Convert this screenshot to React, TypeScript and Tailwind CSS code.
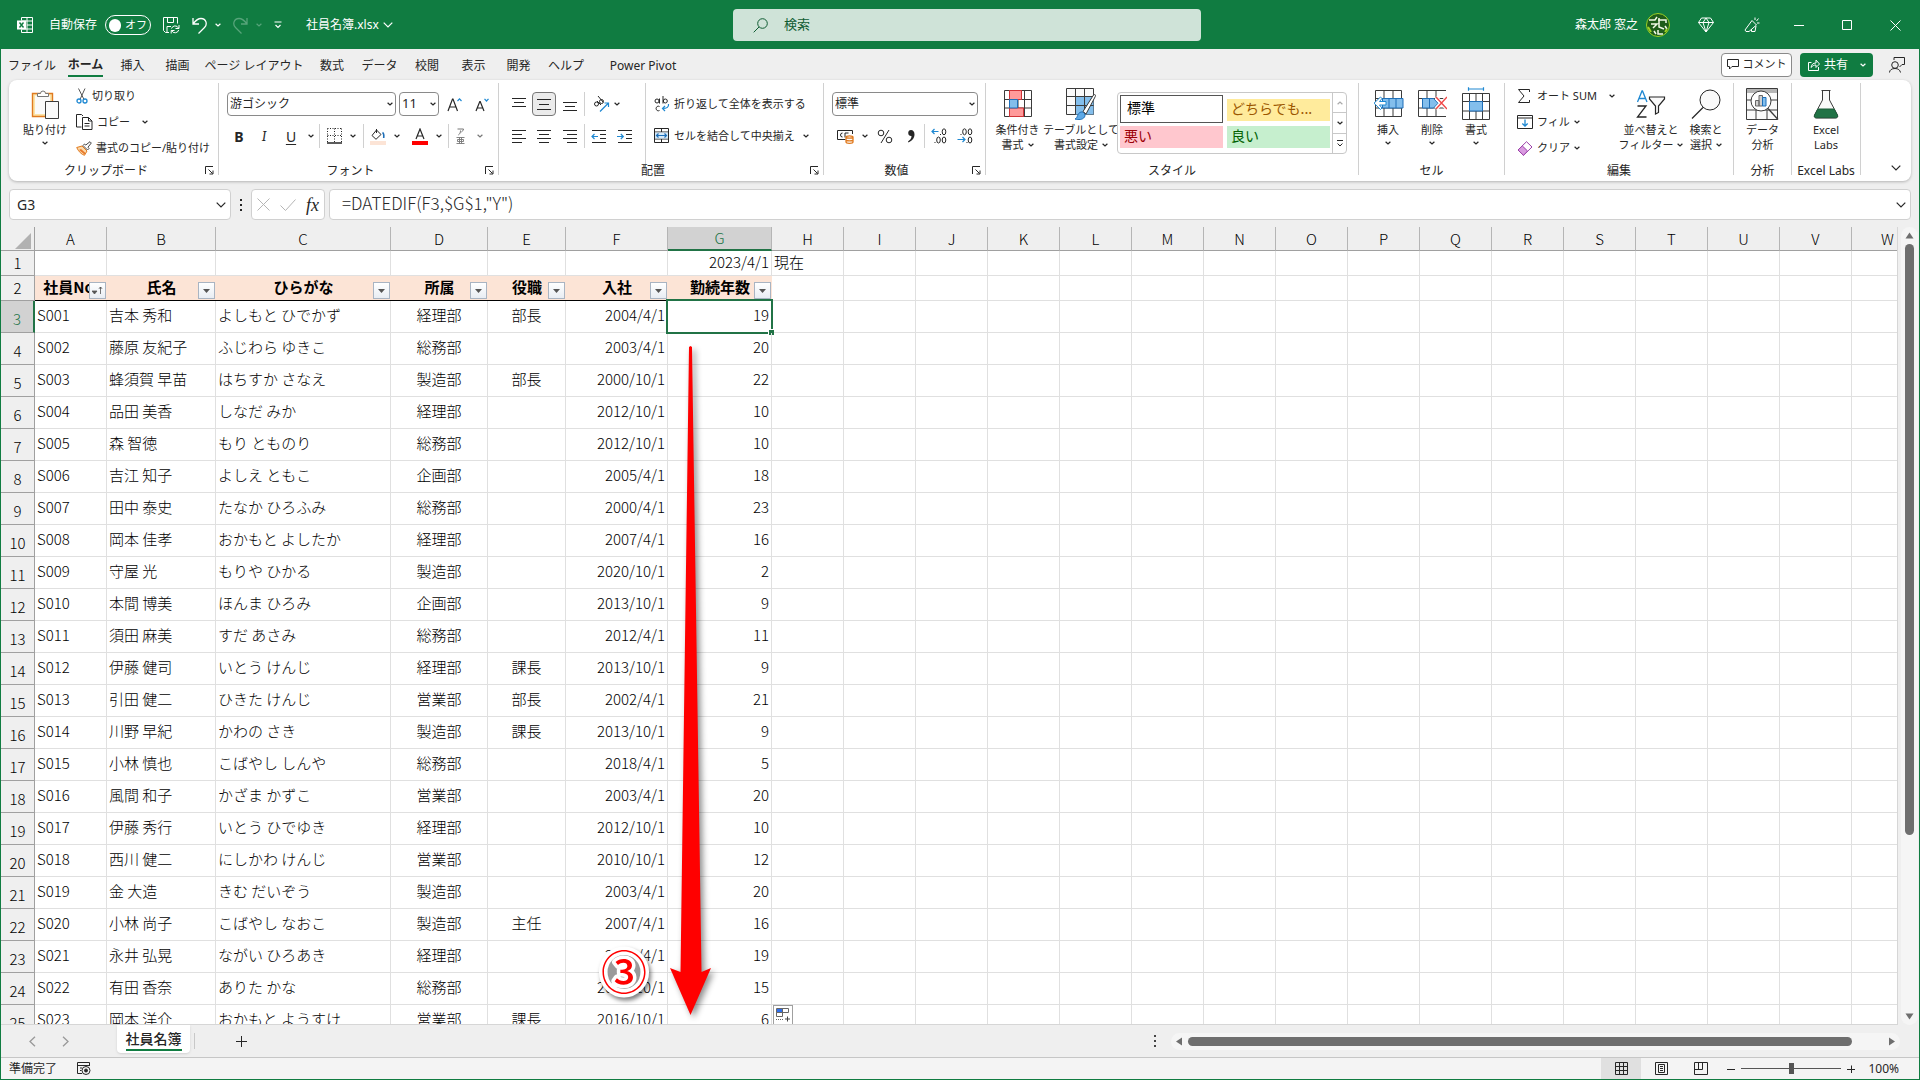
import React, { useState } from 'react';

type Employee = [string, string, string, string, string, string, number];

const employees: Employee[] = [
  ['S001', '吉本 秀和', 'よしもと ひでかず', '経理部', '部長', '2004/4/1', 19],
  ['S002', '藤原 友紀子', 'ふじわら ゆきこ', '総務部', '', '2003/4/1', 20],
  ['S003', '蜂須賀 早苗', 'はちすか さなえ', '製造部', '部長', '2000/10/1', 22],
  ['S004', '品田 美香', 'しなだ みか', '経理部', '', '2012/10/1', 10],
  ['S005', '森 智徳', 'もり とものり', '総務部', '', '2012/10/1', 10],
  ['S006', '吉江 知子', 'よしえ ともこ', '企画部', '', '2005/4/1', 18],
  ['S007', '田中 泰史', 'たなか ひろふみ', '総務部', '', '2000/4/1', 23],
  ['S008', '岡本 佳孝', 'おかもと よしたか', '経理部', '', '2007/4/1', 16],
  ['S009', '守屋 光', 'もりや ひかる', '製造部', '', '2020/10/1', 2],
  ['S010', '本間 博美', 'ほんま ひろみ', '企画部', '', '2013/10/1', 9],
  ['S011', '須田 麻美', 'すだ あさみ', '総務部', '', '2012/4/1', 11],
  ['S012', '伊藤 健司', 'いとう けんじ', '経理部', '課長', '2013/10/1', 9],
  ['S013', '引田 健二', 'ひきた けんじ', '営業部', '部長', '2002/4/1', 21],
  ['S014', '川野 早紀', 'かわの さき', '製造部', '課長', '2013/10/1', 9],
  ['S015', '小林 慎也', 'こばやし しんや', '総務部', '', '2018/4/1', 5],
  ['S016', '風間 和子', 'かざま かずこ', '営業部', '', '2003/4/1', 20],
  ['S017', '伊藤 秀行', 'いとう ひでゆき', '経理部', '', '2012/10/1', 10],
  ['S018', '西川 健二', 'にしかわ けんじ', '営業部', '', '2010/10/1', 12],
  ['S019', '金 大造', 'きむ だいぞう', '製造部', '', '2003/4/1', 20],
  ['S020', '小林 尚子', 'こばやし なおこ', '製造部', '主任', '2007/4/1', 16],
  ['S021', '永井 弘晃', 'ながい ひろあき', '経理部', '', '2004/4/1', 19],
  ['S022', '有田 香奈', 'ありた かな', '総務部', '', '2007/10/1', 15],
  ['S023', '岡本 洋介', 'おかもと ようすけ', '営業部', '課長', '2016/10/1', 6],
];

const columns = [
  { name: 'A', width: 'w-[72px]' },
  { name: 'B', width: 'w-[109px]' },
  { name: 'C', width: 'w-[175px]' },
  { name: 'D', width: 'w-[97px]' },
  { name: 'E', width: 'w-[78px]' },
  { name: 'F', width: 'w-[102px]' },
  { name: 'G', width: 'w-[104px]' },
  ...'HIJKLMNOPQRSTUVW'.split('').map((name) => ({ name, width: 'w-[72px]' })),
];

const fields = ['社員No.', '氏名', 'ひらがな', '所属', '役職', '入社', '勤続年数'];
const emptyColumns = columns.slice(7);

const tabs = [
  { label: 'ファイル', width: 'w-[58px]' },
  { label: 'ホーム', width: 'w-[49px]' },
  { label: '挿入', width: 'w-[45px]' },
  { label: '描画', width: 'w-[45px]' },
  { label: 'ページ レイアウト', width: 'w-[108px]' },
  { label: '数式', width: 'w-[48px]' },
  { label: 'データ', width: 'w-[47px]' },
  { label: '校閲', width: 'w-[48px]' },
  { label: '表示', width: 'w-[45px]' },
  { label: '開発', width: 'w-[45px]' },
  { label: 'ヘルプ', width: 'w-[50px]' },
  { label: 'Power Pivot', width: 'w-[104px]' },
];

type IconProps = { w: number; h: number; className?: string; children: React.ReactNode };

const Icon = ({ w, h, className = '', children }: IconProps) => (
  <svg
    width={w}
    height={h}
    viewBox={`0 0 ${w} ${h}`}
    fill="none"
    stroke="currentColor"
    className={`shrink-0 ${className}`}
    aria-hidden="true"
  >
    {children}
  </svg>
);

const Chevron = ({ className = '' }: { className?: string }) => (
  <Icon w={6} h={4} className={className}>
    <path d="M.6 .7 3 3l2.4-2.3" strokeWidth="1.2" />
  </Icon>
);

const WideChevron = () => (
  <Icon w={10} h={6}>
    <path d="M.7 .7 5 5 9.300 .7" strokeWidth="1.2" />
  </Icon>
);

const Launcher = ({ label }: { label: string }) => (
  <button aria-label={label} className="absolute right-1 bottom-0">
    <Icon w={9} h={9}>
      <path d="M.5 8V.5H8M3.500 3.500l4 4M8 4.500V8H4.500" />
    </Icon>
  </button>
);

type GroupProps = { label: string; width: string; launcher?: boolean; children: React.ReactNode };

const Group = ({ label, width, launcher, children }: GroupProps) => (
  <section className={`relative flex h-[92px] shrink-0 flex-col border-r border-[#d0d0d0] ${width}`}>
    <div className="flex flex-1">{children}</div>
    <h2 className={`text-center text-[12px] leading-[9px] whitespace-nowrap ${launcher ? 'pr-4' : ''}`}>
      {label}
    </h2>
    {launcher && <Launcher label={`${label}の設定`} />}
  </section>
);

const Divider = () => <span className="h-6 w-px shrink-0 bg-[#d0d0d0]" />;

type ToolProps = { label: string; width: string; className?: string; children: React.ReactNode };

const Tool = ({ label, width, className = '', children }: ToolProps) => (
  <button
    aria-label={label}
    className={`flex h-6 shrink-0 items-center justify-center ${width} ${className}`}
  >
    {children}
  </button>
);

type BigButtonProps = { icon: React.ReactNode; lines: string[]; width: string; chevron?: 'inline' | 'below' };

const BigButton = ({ icon, lines, width, chevron }: BigButtonProps) => (
  <button className={`flex shrink-0 flex-col items-center pt-[3px] ${width}`}>
    <span className="flex h-9 items-center">{icon}</span>
    {lines.map((line, i) => (
      <span key={line} className="flex items-center gap-1 leading-[15px] whitespace-nowrap">
        {line}
        {chevron === 'inline' && i === lines.length - 1 && <Chevron />}
      </span>
    ))}
    {chevron === 'below' && <Chevron className="mt-1" />}
  </button>
);

const Lines = ({ rows }: { rows: [number, number, number][] }) => (
  <Icon w={14} h={14}>
    {rows.map(([x1, x2, y]) => (
      <path key={y} d={`M${x1} ${y}H${x2}`} />
    ))}
  </Icon>
);

const ExcelIcon = () => (
  <Icon w={16} h={16}>
    <path d="M4.500 3.500v-3h11v15h-11v-3M10 .5v15M4.500 4h11M10 8h5.500M4.500 12h11" />
    <rect x="0" y="3.500" width="9" height="9" fill="#fff" stroke="none" />
    <path d="M2.500 5.500l4 5M6.500 5.500l-4 5" stroke="#107c41" strokeWidth="1.400" />
  </Icon>
);

const PasteIcon = () => (
  <Icon w={28} h={30}>
    <path d="M1.500 4.500h20v23h-20z" fill="#fce3a6" stroke="#e07a1f" strokeWidth="1.400" />
    <path d="M4 6.500h15v18.500H4z" fill="#fafafa" stroke="none" />
    <path d="M6.500 7.500v-3h3a2.500 2.500 0 0 1 5 0h3v3z" fill="#fff" stroke="#777" />
    <path d="M14.500 12.500h13v17h-13z" fill="#fafafa" stroke="#3b3b3b" />
  </Icon>
);

const ScissorsIcon = () => (
  <Icon w={12} h={16}>
    <path d="M2.500 .5l5.500 11M9 .5l-5 11" stroke="#555" />
    <circle cx="3" cy="13" r="2" stroke="#1e88d2" strokeWidth="1.300" />
    <circle cx="9" cy="13" r="2" stroke="#1e88d2" strokeWidth="1.300" />
  </Icon>
);

const CopyIcon = () => (
  <Icon w={17} h={16}>
    <path d="M5.500 13H.5V.5h5L7 2" />
    <path d="M6.500 3.500h6l3.500 3.500v8.500H6.500zM12.500 3.500V7H16M8.500 9.500h5M8.500 12h5" />
  </Icon>
);

const BrushIcon = () => (
  <Icon w={16} h={15}>
    <path d="M.7 6.500 6 5l5 5-2.500 4.300C5.500 13.500 2.500 10.500.7 6.500z" fill="#fcd9a8" stroke="#e07a1f" />
    <path d="M3 9l5.500 4.500L9.500 12 5 8z" fill="#e8792b" stroke="none" />
    <path d="M7 4.500 11.500 9 13 7.500l-1-1.300L15.300 2 14 .7 9.800 4 8.500 3z" fill="#fff" stroke="#444" />
  </Icon>
);

const ConditionalIcon = () => (
  <Icon w={28} h={28}>
    <path d="M.5 .5h27v26H.5zM.5 9.500h27M.5 18h27M5.500 .5v26M14 .5v26M20.500 .5v26" stroke="#3b3b3b" />
    <path d="M5.500 .5h12v9h-12zM5.500 18h14v8.500h-14z" fill="#ff9a9a" stroke="#d13438" />
    <path d="M5.500 9.500h8V18h-8z" fill="#83beec" stroke="#1e6fb8" />
  </Icon>
);

const TableFormatIcon = () => (
  <Icon w={30} h={32}>
    <path d="M.5 .5h27v26H.5z" fill="#fafafa" stroke="#3b3b3b" />
    <path d="M9.500 8.500h18v18h-18z" fill="#83beec" stroke="none" />
    <path d="M.5 8.500h27M.5 17.500h27M9.500 .5v26M18.500 .5v26" stroke="#3b3b3b" />
    <path d="M9 31c3-1 2-6 6-7 3-.5 5 2.500 3.500 5-2 3-6 3-9.500 2z" fill="#5ea9e6" stroke="#1e6fb8" />
    <path d="M17 23.500 27.500 7c1.500-1 2.500 0 1.800 1.500L20 26z" fill="#fff" stroke="#3b3b3b" />
  </Icon>
);

const InsertIcon = () => (
  <Icon w={31} h={28}>
    <path d="M2.500 .5h26v26h-26zM11 .5v26M20 .5v26M2.500 8.500h26M2.500 18h26" stroke="#3b3b3b" />
    <path d="M9.500 8.500h20.500V18H9.500z" fill="#83beec" stroke="#1e6fb8" />
    <path d="M16 8.500V18M23 8.500V18" stroke="#1e6fb8" />
    <path d="M13 11.500H6.500l2.500-3L7.500 7 1 13.200 7.500 19.500 9 18l-2.500-3H13z" fill="#fff" stroke="#1e88d2" />
  </Icon>
);

const DeleteIcon = () => (
  <Icon w={29} h={28}>
    <path d="M28 .5H.5v26H28M9 .5v8M18 .5v8M9 18v8.500M18 18v8.500M.5 8.500h27M.5 18h27" stroke="#3b3b3b" />
    <path d="M4.500 8.500h11l4.500 4.800-4.500 4.700h-11z" fill="#83beec" stroke="#1e6fb8" />
    <path d="M11.500 8.500V18" stroke="#1e6fb8" />
    <path d="M18 7l11 12M29 7 18 19" stroke="#fff" strokeWidth="3.500" />
    <path d="M18 7l11 12M29 7 18 19" stroke="#f04747" strokeWidth="1.400" />
  </Icon>
);

const FormatIcon = () => (
  <Icon w={28} h={34}>
    <path d="M6.500 2h15M6.500 .3v3.500M21.500 .3v3.500" stroke="#1e88d2" strokeWidth="1.200" />
    <path d="M.5 6.500h27v26H.5zM.5 14.500h27M.5 24h27M7.500 6.500v26M20.500 6.500v26M14 6.500v8M14 24v8.500" stroke="#3b3b3b" />
    <path d="M7.500 14.500h13V24h-13z" fill="#83beec" stroke="#1e6fb8" />
  </Icon>
);

const SortIcon = () => (
  <Icon w={30} h={30}>
    <path d="M1.500 13 6 2h.5L11 13M3 9.500h6.500" stroke="#1e88d2" strokeWidth="1.300" />
    <path d="M1.500 17h8.500L1.500 28H10.500" strokeWidth="1.300" />
    <path d="M13.500 8h15v2L22.500 17v6.500l-3 1.500v-8l-6-7z" fill="#fafafa" strokeWidth="1.200" />
  </Icon>
);

const FindIcon = () => (
  <Icon w={30} h={30}>
    <circle cx="19" cy="11" r="10" fill="#fafafa" />
    <path d="M12 18.500 1 29.500" strokeWidth="1.200" />
  </Icon>
);

const AnalyzeIcon = () => (
  <Icon w={33} h={33}>
    <path d="M.5 .5h31v31H.5zM.5 12h31M.5 22h31M10 22v9.500M21 22v9.500" stroke="#3b3b3b" fill="#fafafa" />
    <path d="M1 1h30v4H1z" fill="#b5b5b5" stroke="none" />
    <circle cx="15" cy="13" r="10" fill="#fff" stroke="#3b3b3b" />
    <path d="M9.500 12.500h3.500V18H9.500zM13 7.500h3.500V18H13z" fill="#d0d0d0" stroke="#666" />
    <path d="M16.500 9.500H20V18h-3.500z" fill="#83beec" stroke="#1e6fb8" />
    <path d="M22 20.500 32 31.500" stroke="#3b3b3b" strokeWidth="1.300" />
  </Icon>
);

const FlaskIcon = () => (
  <Icon w={26} h={29}>
    <path d="M8.500 .5h9M9.500 .5V10L1.500 25c-.6 1.500 0 3 1.700 3h19.600c1.700 0 2.300-1.500 1.700-3L16.500 10V.5" fill="#fafafa" stroke="#3b3b3b" />
    <path d="M4.800 19h16.400l3.300 6.500c.4 1.200-.3 2.200-1.700 2.200H3.200c-1.400 0-2.100-1-1.700-2.200z" fill="#217346" stroke="#1c5c39" />
  </Icon>
);

function TitleBar() {
  const [autoSave, setAutoSave] = useState(false);

  return (
    <header className="flex h-12 shrink-0 items-center bg-[#107c41] text-white">
      <div className="flex flex-1 items-center pl-4 whitespace-nowrap">
        <ExcelIcon />
        <label className="ml-4 flex items-center gap-2">
          自動保存
          <input
            type="checkbox"
            className="sr-only"
            checked={autoSave}
            onChange={(e) => setAutoSave(e.target.checked)}
          />
          <span className="flex h-5 w-[46px] items-center gap-1 rounded-full border border-white px-[3px] text-[11px]">
            <span className="size-[13px] rounded-full bg-white" />
            オフ
          </span>
        </label>
        <button aria-label="上書き保存" className="ml-3">
          <Icon w={17} h={17}>
            <path d="M6 15.500H2.500l-2-2V.5h14v6M4.500 .5v5h6v-5M4 15V9.500h4" />
            <path d="M8.500 11.500a3.800 3.800 0 0 1 7-.5M16 8v3.500h-3.500M15.700 13a3.800 3.800 0 0 1-7 .8M8.200 16.500V13.500h3.300" />
          </Icon>
        </button>
        <button aria-label="元に戻す" className="ml-3 flex items-center gap-2">
          <Icon w={15} h={17}>
            <path d="M1 1v6h6M1.300 6.500C4 3 6 1.500 9 1.500c5.500 0 6.500 6 3.500 9L6.500 16.500" strokeWidth="1.300" />
          </Icon>
          <Chevron />
        </button>
        <button aria-label="やり直し" className="ml-3 flex items-center gap-2 text-[#57a47a]">
          <Icon w={15} h={17}>
            <path d="M14 1v6H8M13.700 6.500C11 3 9 1.500 6 1.500c-5.500 0-6.500 6-3.500 9L8.500 16.500" strokeWidth="1.300" />
          </Icon>
          <Chevron />
        </button>
        <button aria-label="クイック アクセス ツール バーのカスタマイズ" className="ml-3">
          <Icon w={8} h={8}>
            <path d="M.5 1h7M1.500 4l2.500 2.500L6.500 4" strokeWidth="1.200" />
          </Icon>
        </button>
        <button className="ml-6 flex items-center gap-1">
          社員名簿.xlsx
          <WideChevron />
        </button>
      </div>
      <label className="ml-4 flex h-8 w-[468px] items-center gap-4 rounded bg-[#cfe3d8] px-5 text-[#0f5c32]">
        <Icon w={15} h={15}>
          <circle cx="9.500" cy="5.500" r="4.800" />
          <path d="M6 9 .7 14.300" />
        </Icon>
        <input
          aria-label="検索"
          placeholder="検索"
          className="min-w-0 flex-1 bg-transparent text-[13px] outline-none placeholder:text-[#0f5c32]"
        />
      </label>
      <div className="flex flex-1 items-center justify-end pr-[18px]">
        <span>森太郎 窓之</span>
        <Icon w={24} h={24} className="ml-2">
          <circle cx="12" cy="12" r="11.500" fill="#1f5c1a" stroke="#9bd126" strokeWidth="1" />
          <path d="M3 7h6l2-3M12 7h8v3M5 11h6l-4 4M13 5v9l5 2M8 18l2 3M12 17v4h5M19 13l2 3" stroke="#f4f9e8" strokeWidth="1.500" />
          <path d="M2 14l3 5M19 19l2-3" stroke="#9bd126" strokeWidth="2" />
        </Icon>
        <button aria-label="Premium" className="ml-7">
          <Icon w={16} h={16}>
            <path d="M3.500 1h9l3 4.500L8 15 .5 5.500zM.5 5.500h15M5 5.500 8 15l3-9.500L8 1 5 5.500" />
          </Icon>
        </button>
        <button aria-label="近日公開の機能" className="ml-[30px]">
          <Icon w={16} h={16}>
            <path d="M8 3.500 12.500 8 5 14.500H2L1 13zM7.500 12v2.500H11L12 9M11 3V.5M12.500 4l2-2.500M13 6h2.500" />
          </Icon>
        </button>
        <button aria-label="最小化" className="ml-[34px]">
          <Icon w={10} h={10}><path d="M0 5.500h10" /></Icon>
        </button>
        <button aria-label="元のサイズに戻す" className="ml-[38px]">
          <Icon w={10} h={10}><path d="M.5 .5h9v9h-9z" /></Icon>
        </button>
        <button aria-label="閉じる" className="ml-[38px]">
          <Icon w={11} h={11}><path d="M.5 .5l10 10M10.500 .5l-10 10" /></Icon>
        </button>
      </div>
    </header>
  );
}

function TabRow() {
  return (
    <nav className="flex h-[31px] shrink-0 items-center pl-[2px]">
      {tabs.map((tab) => (
        <button
          key={tab.label}
          className={`flex h-full shrink-0 items-center justify-center pt-[3px] whitespace-nowrap ${tab.width} ${
            tab.label === 'ホーム' ? 'font-bold' : ''
          }`}
        >
          <span
            className={
              tab.label === 'ホーム'
                ? 'border-b-2 border-[#107c41] leading-5'
                : 'leading-5'
            }
          >
            {tab.label}
          </span>
        </button>
      ))}
      <div className="ml-auto flex items-center pr-[14px]">
        <button className="flex h-6 w-[71px] items-center justify-center gap-1 rounded border border-[#8a8a8a] bg-white text-[11px]">
          <Icon w={12} h={11}><path d="M.5 .5h11v7H5L2.500 10V7.500h-2z" /></Icon>
          コメント
        </button>
        <button className="ml-2 flex h-6 w-[73px] items-center gap-1 rounded bg-[#107c41] pl-2 text-white">
          <Icon w={12} h={12}>
            <path d="M3.500 3.500h-3v8h10V8M3 8.500C3.500 5.500 5 4 8 4V1l3.500 4L8 8.500V6C6 6 4.500 6.800 3 8.500z" />
          </Icon>
          共有
          <Chevron className="ml-2" />
        </button>
        <button aria-label="プレゼンス" className="ml-4">
          <Icon w={16} h={16}>
            <circle cx="6" cy="8" r="3.300" />
            <path d="M.5 15.500c0-2.500 2.300-4 5.500-4s5 1.500 5.500 4M5 3V.5h10.500v7H13L10.500 10" />
          </Icon>
        </button>
      </div>
    </nav>
  );
}

function ClipboardGroup() {
  return (
    <Group label="クリップボード" width="w-[209px]" launcher>
      <BigButton width="w-[54px] ml-2" icon={<PasteIcon />} lines={['貼り付け']} chevron="below" />
      <div className="ml-1 flex flex-col">
        <button className="flex h-[26px] items-center gap-1"><ScissorsIcon />切り取り</button>
        <button className="flex h-[26px] items-center gap-1">
          <CopyIcon />コピー<Chevron className="ml-2" />
        </button>
        <button className="flex h-[26px] items-center gap-1 whitespace-nowrap">
          <BrushIcon />書式のコピー/貼り付け
        </button>
      </div>
    </Group>
  );
}

function FontGroup() {
  return (
    <Group label="フォント" width="w-[280px]" launcher>
      <div className="flex flex-col gap-2 pt-[9px] pl-2">
        <div className="flex gap-[3px]">
          <label className="relative">
            <select aria-label="フォント" className="h-6 w-[169px] appearance-none rounded border border-[#8a8a8a] bg-white px-[2px] text-[12px]">
              <option>游ゴシック</option>
            </select>
            <Chevron className="absolute top-[10px] right-[3px]" />
          </label>
          <label className="relative">
            <select aria-label="フォント サイズ" className="h-6 w-10 appearance-none rounded border border-[#8a8a8a] bg-white px-[2px] text-[13px]">
              <option>11</option>
            </select>
            <Chevron className="absolute top-[10px] right-[3px]" />
          </label>
          <Tool label="フォント サイズの拡大" width="w-6">
            <Icon w={15} h={15}>
              <path d="M1 14 5.500 2h.5l4.500 12M2.500 10h6.500" strokeWidth="1.200" />
              <path d="M10.500 4l2-2.200 2 2.200" stroke="#1e88d2" strokeWidth="1.200" />
            </Icon>
          </Tool>
          <Tool label="フォント サイズの縮小" width="w-6">
            <Icon w={15} h={15}>
              <path d="M2 14 5.800 4.500h.4L10 14M3.500 11h5" strokeWidth="1.200" />
              <path d="M10.500 1.800l2 2.200 2-2.200" stroke="#1e88d2" strokeWidth="1.200" />
            </Icon>
          </Tool>
        </div>
        <div className="flex items-center">
          <Tool label="太字" width="w-6"><b className="text-[14px]">B</b></Tool>
          <Tool label="斜体" width="w-[26px]"><i className="font-serif text-[14px]">I</i></Tool>
          <Tool label="下線" width="w-[42px]" className="gap-3 pl-1">
            <u className="text-[14px] underline-offset-2">U</u>
            <Chevron />
          </Tool>
          <Divider />
          <Tool label="罫線" width="w-[43px]" className="gap-2">
            <Icon w={15} h={16}>
              <path d="M.5 .5h14M.5 7.500h14M.5 .5v14M7.500 .5v14M14.500 .5v14" strokeDasharray="1 1.500" />
              <path d="M0 15h15" strokeWidth="1.500" />
            </Icon>
            <Chevron />
          </Tool>
          <Divider />
          <Tool label="塗りつぶしの色" width="w-[42px]" className="gap-2">
            <Icon w={16} h={17}>
              <path d="M6.500 2 11 6.500 6 11.300 2 7.500zM6.500 5V1" />
              <path d="M12.500 4.500c1.500 1 1.500 3 1.200 5.500" stroke="#1e6fb8" strokeWidth="1.600" />
              <path d="M0 13h16v4H0z" fill="#fce4d6" stroke="none" />
            </Icon>
            <Chevron />
          </Tool>
          <Tool label="フォントの色" width="w-[42px]" className="gap-2">
            <Icon w={16} h={17}>
              <path d="M4 11 8 1l4 10M5.300 8h5.400" strokeWidth="1.200" />
              <path d="M0 13h16v4H0z" fill="#f00" stroke="none" />
            </Icon>
            <Chevron />
          </Tool>
          <Divider />
          <Tool label="ふりがなの表示" width="w-[40px]" className="gap-3 text-[#777]">
            <Icon w={9} h={17}>
              <path d="M1.500 1h6C7.300 2.500 6.500 3.300 5.300 4M4.500 2.500C4.500 4.500 4 6 2.300 7" />
              <path d="M.5 9.500h8M3.500 9.500v6M5.500 9.500v6M1.500 11.500h6v2h-6zM.5 15.500h8" strokeWidth=".9" />
            </Icon>
            <Chevron />
          </Tool>
        </div>
      </div>
    </Group>
  );
}

function AlignmentGroup() {
  return (
    <Group label="配置" width="w-[325px]" launcher>
      <div className="flex flex-col gap-2 pt-[9px] pl-[7px]">
        <div className="flex items-center">
          <Tool label="上揃え" width="w-[26px]"><Lines rows={[[0, 14, 1.5], [2, 12, 5.5], [0, 14, 9.5]]} /></Tool>
          <Tool label="上下中央揃え" width="w-6" className="rounded border border-[#777] bg-[#ebebeb]">
            <Lines rows={[[0, 14, 2.5], [2, 12, 7.5], [0, 14, 12.5]]} />
          </Tool>
          <Tool label="下揃え" width="w-[28px]"><Lines rows={[[0, 14, 5.5], [2, 12, 9.5], [0, 14, 13.5]]} /></Tool>
          <Divider />
          <Tool label="方向" width="w-[42px]" className="gap-1">
            <Icon w={17} h={17}>
              <circle cx="3.500" cy="8" r="2" /><path d="M4 5l4 4" />
              <circle cx="8.500" cy="5.500" r="2" /><path d="M5 0l5 6" />
              <path d="M7 15.500 15 7.500M11.500 7H15.500v4" stroke="#1e88d2" strokeWidth="1.200" />
            </Icon>
            <Chevron />
          </Tool>
        </div>
        <div className="flex items-center">
          <Tool label="左揃え" width="w-[26px]"><Lines rows={[[0, 14, 1.5], [0, 10, 5.5], [0, 14, 9.5], [0, 10, 13.5]]} /></Tool>
          <Tool label="中央揃え" width="w-6"><Lines rows={[[0, 14, 1.5], [2, 12, 5.5], [0, 14, 9.5], [2, 12, 13.5]]} /></Tool>
          <Tool label="右揃え" width="w-[28px]"><Lines rows={[[0, 14, 1.5], [4, 14, 5.5], [0, 14, 9.5], [4, 14, 13.5]]} /></Tool>
          <Divider />
          <Tool label="インデントを減らす" width="w-[26px]">
            <Icon w={15} h={14}>
              <path d="M1 1.500h14M9 5.500h6M9 9.500h6M1 13.500h14" />
              <path d="M7 7.500H1M3.500 5 1 7.500 3.500 10" stroke="#1e88d2" strokeWidth="1.200" />
            </Icon>
          </Tool>
          <Tool label="インデントを増やす" width="w-[26px]">
            <Icon w={15} h={14}>
              <path d="M1 1.500h14M9 5.500h6M9 9.500h6M1 13.500h14" />
              <path d="M0 7.500h6M3.800 5 6.300 7.500 3.800 10" stroke="#1e88d2" strokeWidth="1.200" />
            </Icon>
          </Tool>
        </div>
      </div>
      <div className="ml-2 flex flex-col gap-2 border-l border-[#d0d0d0] pt-[9px] pl-2">
        <button className="flex h-6 items-center gap-1 whitespace-nowrap">
          <Icon w={16} h={16}>
            <circle cx="3" cy="5" r="2" /><path d="M5.500 2.500v5M9 0v7.500" /><circle cx="11.300" cy="5" r="2" />
            <path d="M5.500 10.500a2.300 2.300 0 1 0 0 4" />
            <path d="M14.500 8c.5 3-1.500 4.500-6 4.500M11 10l-2.500 2.500L11 15" stroke="#1e88d2" strokeWidth="1.200" />
          </Icon>
          折り返して全体を表示する
        </button>
        <button className="flex h-6 items-center gap-1 whitespace-nowrap">
          <Icon w={16} h={16}>
            <path d="M.5 .5h14v14H.5zM.5 4h14M.5 11h14M7.500 .5V4M7.500 11v3.500" />
            <path d="M1 4.500h13v6H1z" fill="#d4e9f9" stroke="none" />
            <path d="M2 7.500h11M4.500 5.500l-2 2 2 2M10.500 5.500l2 2-2 2" stroke="#1e6fb8" strokeWidth="1.200" />
          </Icon>
          セルを結合して中央揃え
          <Chevron className="ml-1" />
        </button>
      </div>
    </Group>
  );
}

function NumberGroup() {
  return (
    <Group label="数値" width="w-[162px]" launcher>
      <div className="flex flex-col gap-2 pt-[9px] pl-2">
        <label className="relative">
          <select aria-label="表示形式" className="h-6 w-[146px] appearance-none rounded border border-[#8a8a8a] bg-white px-[2px] text-[12px]">
            <option>標準</option>
          </select>
          <Chevron className="absolute top-[10px] right-[3px]" />
        </label>
        <div className="flex items-center">
          <Tool label="通貨表示形式" width="w-10" className="gap-2">
            <Icon w={17} h={15}>
              <path d="M15.500 5V1.500H.5v9h8M5.500 4a2 2 0 1 0 0 4M8 8.500V4h3.500" />
              <path d="M9 8c0-1.500 7-1.500 7 0v5c0 1.700-7 1.700-7 0zM9 8c0 1.500 7 1.500 7 0M9 10.700c0 1.500 7 1.500 7 0" fill="#fff" stroke="#e07a1f" strokeWidth="1.300" />
            </Icon>
            <Chevron />
          </Tool>
          <Tool label="パーセント スタイル" width="w-[26px]">
            <Icon w={16} h={15}>
              <circle cx="4" cy="4" r="2.800" /><circle cx="12" cy="11" r="2.800" /><path d="M12 1 4 14" />
            </Icon>
          </Tool>
          <Tool label="桁区切りスタイル" width="w-[26px]">
            <Icon w={8} h={14}>
              <path d="M4 1a3 3 0 1 0 .5 6C4.500 9.500 3 11 1 12.500l.5 1C5 12 7.500 9 7.500 5.500 7.500 2.500 6 1 4 1z" fill="currentColor" stroke="none" />
            </Icon>
          </Tool>
          <Divider />
          <Tool label="小数点以下の表示桁数を増やす" width="w-[28px]">
            <Icon w={16} h={16}>
              <path d="M7.500 3.500H1M3.500 1 1 3.500 3.500 6" stroke="#1e88d2" strokeWidth="1.200" />
              <ellipse cx="13" cy="3.800" rx="1.800" ry="3" /><ellipse cx="7.500" cy="12" rx="1.800" ry="3" /><ellipse cx="13" cy="12" rx="1.800" ry="3" />
              <path d="M9 6.500h1M3.500 14.500h1" />
            </Icon>
          </Tool>
          <Tool label="小数点以下の表示桁数を減らす" width="w-[24px]">
            <Icon w={16} h={16}>
              <path d="M.5 11.500H8M5.500 9 8 11.500 5.500 14" stroke="#1e88d2" strokeWidth="1.200" />
              <ellipse cx="7.500" cy="3.800" rx="1.800" ry="3" /><ellipse cx="13" cy="3.800" rx="1.800" ry="3" /><ellipse cx="13" cy="12" rx="1.800" ry="3" />
              <path d="M3.500 6.500h1M9.500 14.500h1" />
            </Icon>
          </Tool>
        </div>
      </div>
    </Group>
  );
}

function StylesGroup() {
  return (
    <Group label="スタイル" width="w-[373px]">
      <BigButton width="w-[55px] ml-1" icon={<ConditionalIcon />} lines={['条件付き', '書式']} chevron="inline" />
      <BigButton width="w-[72px]" icon={<TableFormatIcon />} lines={['テーブルとして', '書式設定']} chevron="inline" />
      <div className="mt-[9px] flex h-[62px] w-[230px] rounded border border-[#c8c8c8] font-['Noto_Sans_CJK_JP',sans-serif] text-[14px] leading-[18px]">
        <div className="grid flex-1 grid-cols-2 content-start items-start gap-x-1 gap-y-[3px] p-[2px]">
          <button className="h-7 border border-[#555] pb-1 pl-[6px] text-left text-black">標準</button>
          <button className="mt-1 h-[22px] bg-[#ffeb9c] px-1 pb-1 text-left whitespace-nowrap text-[#9c5700]">どちらでも...</button>
          <button className="h-[22px] bg-[#ffc7ce] px-1 pb-1 text-left text-[#9c0006]">悪い</button>
          <button className="h-[22px] bg-[#c6efce] px-1 pb-1 text-left text-[#006100]">良い</button>
        </div>
        <div className="flex w-[14px] flex-col divide-y divide-[#c8c8c8] border-l border-[#c8c8c8]">
          <button aria-label="前の行" className="flex flex-1 items-center justify-center text-[#aaa]">
            <Chevron className="rotate-180" />
          </button>
          <button aria-label="次の行" className="flex flex-1 items-center justify-center"><Chevron /></button>
          <button aria-label="その他のスタイル" className="flex flex-1 items-center justify-center">
            <Icon w={6} h={7}><path d="M0 .5h6M.6 3.500 3 6l2.400-2.500" /></Icon>
          </button>
        </div>
      </div>
    </Group>
  );
}

function EditingGroup() {
  return (
    <Group label="編集" width="w-[229px]">
      <div className="flex w-[114px] flex-col pr-1 pl-3">
        <button className="flex h-[26px] items-center gap-1 whitespace-nowrap">
          <Icon w={16} h={14}><path d="M12.500 3V.5h-11L7 7l-5.500 6.500h11V11" /></Icon>
          オート SUM
          <Chevron className="ml-auto" />
        </button>
        <button className="flex h-[26px] items-center gap-1">
          <Icon w={16} h={14}>
            <path d="M.5 .5h15v13H.5zM.5 3h15" />
            <path d="M8 4.500v6.500M5.300 8.500 8 11l2.700-2.500" stroke="#1e88d2" strokeWidth="1.300" />
          </Icon>
          フィル
          <Chevron />
        </button>
        <button className="flex h-[26px] items-center gap-1">
          <Icon w={16} h={15}>
            <path d="M9.500 .7 15 6l-8.500 8.300L1 9z" fill="#fff" stroke="#9b3fa8" />
            <path d="M5.300 4.900 10.600 10 6.500 14.300 1 9z" fill="#d99be0" stroke="#9b3fa8" />
          </Icon>
          クリア
          <Chevron />
        </button>
      </div>
      <BigButton width="w-[64px]" icon={<SortIcon />} lines={['並べ替えと', 'フィルター']} chevron="inline" />
      <BigButton width="w-[46px]" icon={<FindIcon />} lines={['検索と', '選択']} chevron="inline" />
    </Group>
  );
}

function Ribbon() {
  return (
    <div className="mx-2 flex h-[101px] shrink-0 rounded-lg bg-white pt-[3px] pl-px text-[11px] shadow-[0_1px_3px_rgba(0,0,0,0.25)]">
      <ClipboardGroup />
      <FontGroup />
      <AlignmentGroup />
      <NumberGroup />
      <StylesGroup />
      <Group label="セル" width="w-[146px]">
        <BigButton width="w-[44px] ml-[7px]" icon={<InsertIcon />} lines={['挿入']} chevron="below" />
        <BigButton width="w-[44px]" icon={<DeleteIcon />} lines={['削除']} chevron="below" />
        <BigButton width="w-[44px]" icon={<FormatIcon />} lines={['書式']} chevron="below" />
      </Group>
      <EditingGroup />
      <Group label="分析" width="w-[58px]">
        <BigButton width="w-full" icon={<AnalyzeIcon />} lines={['データ', '分析']} />
      </Group>
      <Group label="Excel Labs" width="w-[69px]">
        <BigButton width="w-full" icon={<FlaskIcon />} lines={['Excel', 'Labs']} />
      </Group>
      <button aria-label="リボンの表示オプション" className="mb-[6px] ml-auto self-end p-[10px] pb-1">
        <WideChevron />
      </button>
    </div>
  );
}

function FormulaBar() {
  return (
    <div className="mx-2 mt-2 mb-[7px] flex h-[31px] shrink-0 items-stretch text-[14px]">
      <div className="flex w-[222px] items-center rounded border border-[#d0d0d0] bg-white px-1">
        <input aria-label="名前ボックス" defaultValue="G3" className="min-w-0 flex-1 px-[3px] outline-none" />
        <button aria-label="名前の一覧"><WideChevron /></button>
      </div>
      <Icon w={20} h={31}>
        <path d="M9 11h2M9 16h2M9 21h2" strokeWidth="2" />
      </Icon>
      <div className="flex w-[74px] items-center justify-around rounded border border-[#d0d0d0] bg-white">
        <button aria-label="キャンセル" className="text-[#b5b5b5]">
          <Icon w={13} h={13}><path d="M.5 .5l12 12M12.500 .5l-12 12" /></Icon>
        </button>
        <button aria-label="入力" className="text-[#b5b5b5]">
          <Icon w={16} h={12}><path d="M.5 6.500 5.500 11.500 15.500 .5" /></Icon>
        </button>
        <button aria-label="関数の挿入" className="font-['Liberation_Serif',serif] text-[18px] leading-5 italic">fx</button>
      </div>
      <div className="ml-1 flex flex-1 items-center rounded border border-[#d0d0d0] bg-white pr-1">
        <input
          aria-label="数式バー"
          defaultValue={'=DATEDIF(F3,$G$1,"Y")'}
          className="min-w-0 flex-1 px-3 pb-[3px] font-['Noto_Sans_CJK_JP',sans-serif] text-[17px] leading-5 font-light outline-none"
        />
        <button aria-label="数式バーの展開"><WideChevron /></button>
      </div>
    </div>
  );
}

const FilterButton = ({ label, sorted }: { label: string; sorted?: boolean }) => (
  <button
    aria-label={`${label}のフィルター`}
    className="absolute right-px bottom-px flex size-[17px] items-center justify-center border border-[#a9b4c2] bg-gradient-to-b from-white to-[#e8edf3] text-[#555]"
  >
    <Icon w={11} h={9}>
      {sorted ? (
        <path d="M0 5h5L2.500 8zM8.500 8V1M7 2.500 8.500 1 10 2.500" fill="currentColor" strokeWidth=".8" />
      ) : (
        <path d="M2 3h7L5.500 7z" fill="currentColor" stroke="none" />
      )}
    </Icon>
  </button>
);

const cell = 'border-r border-b border-[#e0e0e0] p-0';
const rowHead = 'border-r border-b border-[#a0a0a0] p-0 font-light text-center';

function Sheet() {
  return (
    <div className="relative min-w-0 flex-1 overflow-hidden border-r border-b border-[#d6d6d6] bg-white">
      <table className="w-max table-fixed border-separate border-spacing-0 font-['Noto_Sans_CJK_JP',sans-serif] text-[15px] leading-5 font-light whitespace-nowrap text-black">
        <colgroup>
          <col className="w-[34px]" />
          {columns.map((col) => (
            <col key={col.name} className={col.width} />
          ))}
        </colgroup>
        <thead>
          <tr className="h-6 bg-[#efefef]">
            <th className="border-r border-b border-[#a0a0a0] p-0">
              <Icon w={16} h={16} className="mt-1 ml-[14px]">
                <path d="M16 0v16H0z" fill="#b1b1b1" stroke="none" />
              </Icon>
            </th>
            {columns.map((col) => (
              <th
                key={col.name}
                className={`p-0 font-light ${
                  col.name === 'G'
                    ? 'border-r border-b-2 border-r-[#b5b5b5] border-b-[#217346] bg-[#d2d2d2] text-[#217346]'
                    : 'border-r border-b border-r-[#b5b5b5] border-b-[#a0a0a0]'
                }`}
              >
                {col.name}
              </th>
            ))}
          </tr>
        </thead>
        <tbody>
          <tr className="h-[25px]">
            <th className={`${rowHead} bg-[#efefef]`}>1</th>
            {columns.map((col) => (
              <td key={col.name} className={`${cell} px-[2px] pb-[2px] ${col.name === 'G' ? 'text-right' : ''}`}>
                {col.name === 'G' && '2023/4/1'}
                {col.name === 'H' && '現在'}
              </td>
            ))}
          </tr>
          <tr className="h-[25px]">
            <th className={`${rowHead} bg-[#efefef]`}>2</th>
            {fields.map((field, i) => (
              <th key={field} className="relative border-b border-black bg-[#fce4d6] p-0 pb-[2px] font-bold">
                {field}
                <FilterButton label={field} sorted={i === 0} />
              </th>
            ))}
            {emptyColumns.map((col) => (
              <td key={col.name} className={cell} />
            ))}
          </tr>
          {employees.map(([id, name, kana, dept, post, joined, years], i) => (
            <tr key={id} className="h-8">
              <th
                className={`${rowHead} pt-1 ${
                  i === 0 ? 'border-r-2 border-r-[#217346] bg-[#d2d2d2] text-[#217346]' : 'bg-[#efefef]'
                }`}
              >
                {i + 3}
              </th>
              <td className={`${cell} px-[2px] pb-1`}>{id}</td>
              <td className={`${cell} px-[2px] pb-1`}>{name}</td>
              <td className={`${cell} px-[2px] pb-1`}>{kana}</td>
              <td className={`${cell} pb-1 text-center`}>{dept}</td>
              <td className={`${cell} pb-1 text-center`}>{post}</td>
              <td className={`${cell} px-[2px] pb-1 text-right`}>{joined}</td>
              <td className={`${cell} relative px-[2px] pb-1 text-right`}>
                {years}
                {i === 0 && (
                  <span className="absolute -inset-[2px] border-2 border-[#217346]">
                    <span className="absolute -right-[3px] -bottom-[3px] size-[6px] border-t border-l border-white bg-[#217346]" />
                  </span>
                )}
              </td>
              {emptyColumns.map((col) => (
                <td key={col.name} className={cell} />
              ))}
            </tr>
          ))}
        </tbody>
      </table>

      {/* fill direction */}
      <svg
        width="60"
        height="680"
        viewBox="0 0 60 680"
        className="absolute top-[119px] left-[667px] drop-shadow-[3px_3px_3px_rgba(0,0,0,0.45)]"
      >
        <path d="M22.500 0 24 1 33.500 626 43 622 22.500 669 2 622 12.500 626 21 1z" fill="#f00" />
      </svg>
      <svg
        width="60"
        height="60"
        viewBox="0 0 60 60"
        className="absolute top-[716px] left-[593px] drop-shadow-[2px_3px_2px_rgba(0,0,0,0.5)]"
      >
        <circle cx="30" cy="29" r="18" fill="#9a9a9a" />
        <text
          x="30"
          y="46"
          textAnchor="middle"
          fill="#f00"
          stroke="#fff"
          strokeWidth="7"
          strokeLinejoin="round"
          paintOrder="stroke"
          className="font-['Noto_Sans_CJK_JP',sans-serif] text-[46px] font-medium"
        >
          ③
        </text>
      </svg>
      <button aria-label="オートフィル オプション" className="absolute top-[778px] left-[772px] border border-[#a0a0a0] bg-white">
        <Icon w={18} h={18}>
          <path d="M2.500 2.500h12v4h-12zM2.500 6.500h6v4h-6zM8.500 2.500v4" stroke="#666" />
          <path d="M3 3h5v3H3z" fill="#2f6fed" stroke="none" />
          <path d="M2 13.500h7" strokeDasharray="1 1" stroke="#666" />
          <path d="M11 13h5M13.500 10.500v5" stroke="#444" />
        </Icon>
      </button>
    </div>
  );
}

const Triangle = ({ d }: { d: string }) => (
  <Icon w={9} h={9} className="text-[#6e6e6e]">
    <path d={d} fill="currentColor" stroke="none" />
  </Icon>
);

function SheetBar() {
  return (
    <div className="flex h-8 shrink-0 pr-[19px]">
      <div className="flex w-[116px] items-center gap-[26px] pl-[28px] text-[#999]">
        <button aria-label="前のシート">
          <Icon w={7} h={11}><path d="M6 .7 1 5.500l5 4.800" strokeWidth="1.300" /></Icon>
        </button>
        <button aria-label="次のシート">
          <Icon w={7} h={11}><path d="M1 .7l5 4.800-5 4.800" strokeWidth="1.300" /></Icon>
        </button>
      </div>
      <button className="h-7 w-[73px] rounded-b bg-white text-[14px] font-medium shadow-sm">
        <span className="inline-block border-b-2 border-[#107c41] leading-5">社員名簿</span>
      </button>
      <span className="mt-2 ml-1 h-4 w-px bg-[#c8c8c8]" />
      <button aria-label="新しいシート" className="ml-[41px]">
        <Icon w={11} h={11}><path d="M0 5.500h11M5.500 0v11" /></Icon>
      </button>
      <div className="ml-auto flex w-[746px] items-center">
        <svg width="3" height="13" viewBox="0 0 3 13" fill="#444" aria-hidden="true">
          <path d="M0 0h2v2H0zM0 5h2v2H0zM0 10h2v2H0z" />
        </svg>
        <div className="ml-[14px] flex h-[17px] flex-1 items-center rounded-full bg-[#f5f5f5] px-1">
          <button aria-label="左へスクロール"><Triangle d="M7 .5v8L1 4.500z" /></button>
          <div className="ml-1 flex-1">
            <div className="h-[9px] w-[95%] rounded-full bg-[#6e6e6e]" />
          </div>
          <button aria-label="右へスクロール"><Triangle d="M2 .5v8l6-4z" /></button>
        </div>
      </div>
    </div>
  );
}

function StatusBar() {
  const [zoom, setZoom] = useState(100);

  return (
    <footer className="flex h-[22px] shrink-0 items-center border-t border-[#c6c6c6] bg-[#f4f4f4] pl-2">
      <span>準備完了</span>
      <button aria-label="マクロの記録" className="ml-5">
        <Icon w={14} h={13}>
          <path d="M5 11.500H.5V.5h12V4M.5 3.500h12M3 6h2M3 8.500h1.500" />
          <circle cx="9" cy="8.500" r="4" /><circle cx="9" cy="8.500" r="1.500" fill="currentColor" />
        </Icon>
      </button>
      <div className="ml-auto flex h-full items-center pr-5">
        <button aria-label="標準" className="flex h-full w-10 items-center justify-center bg-[#e0e0e0]">
          <Icon w={13} h={13}><path d="M.5 .5h12v12H.5zM.5 4.500h12M.5 8.500h12M4.500 .5v12M8.500 .5v12" /></Icon>
        </button>
        <button aria-label="ページ レイアウト" className="flex h-full w-10 items-center justify-center">
          <Icon w={13} h={13}><path d="M.5 .5h12v12H.5zM3.500 2.500h6v8h-6zM5 4.500h3M5 6.500h3M5 8.500h3" /></Icon>
        </button>
        <button aria-label="改ページ プレビュー" className="flex h-full w-10 items-center justify-center">
          <Icon w={14} h={13}><path d="M.5 .5h13v12H.5zM4.500 .5v7M8.500 .5v7M.5 7.500h8" /></Icon>
        </button>
        <button aria-label="縮小" className="ml-[6px]"><Icon w={8} h={8}><path d="M0 4.500h8" /></Icon></button>
        <input
          type="range"
          aria-label="ズーム"
          min={10}
          max={190}
          value={zoom}
          onChange={(e) => setZoom(Number(e.target.value))}
          className="mx-[6px] h-px w-[100px] appearance-none bg-[#555] [&::-webkit-slider-thumb]:h-[11px] [&::-webkit-slider-thumb]:w-[5px] [&::-webkit-slider-thumb]:appearance-none [&::-webkit-slider-thumb]:bg-[#555]"
        />
        <button aria-label="拡大"><Icon w={8} h={8}><path d="M0 4.500h8M4.500 .5v8" /></Icon></button>
        <span className="ml-[10px] w-[34px] text-right">{zoom}%</span>
      </div>
    </footer>
  );
}

const App: React.FC = () => {
  return (
    <div className="flex h-screen flex-col overflow-hidden border border-[#107c41] bg-[#efefef] font-['Noto_Sans','Noto_Sans_CJK_JP',sans-serif] text-[12px] text-[#262626]">
      <TitleBar />
      <TabRow />
      <Ribbon />
      <FormulaBar />
      <main className="flex min-h-0 flex-1">
        <Sheet />
        <div className="mr-px ml-[3px] flex w-[17px] flex-col items-center rounded-full bg-[#f5f5f5] py-1">
          <button aria-label="上へスクロール"><Triangle d="M.5 7.500h8l-4-6z" /></button>
          <div className="mt-1 w-[9px] flex-1">
            <div className="h-[77%] rounded-full bg-[#6e6e6e]" />
          </div>
          <button aria-label="下へスクロール"><Triangle d="M.5 1.500h8l-4 6z" /></button>
        </div>
      </main>
      <SheetBar />
      <StatusBar />
    </div>
  );
};

export default App;
